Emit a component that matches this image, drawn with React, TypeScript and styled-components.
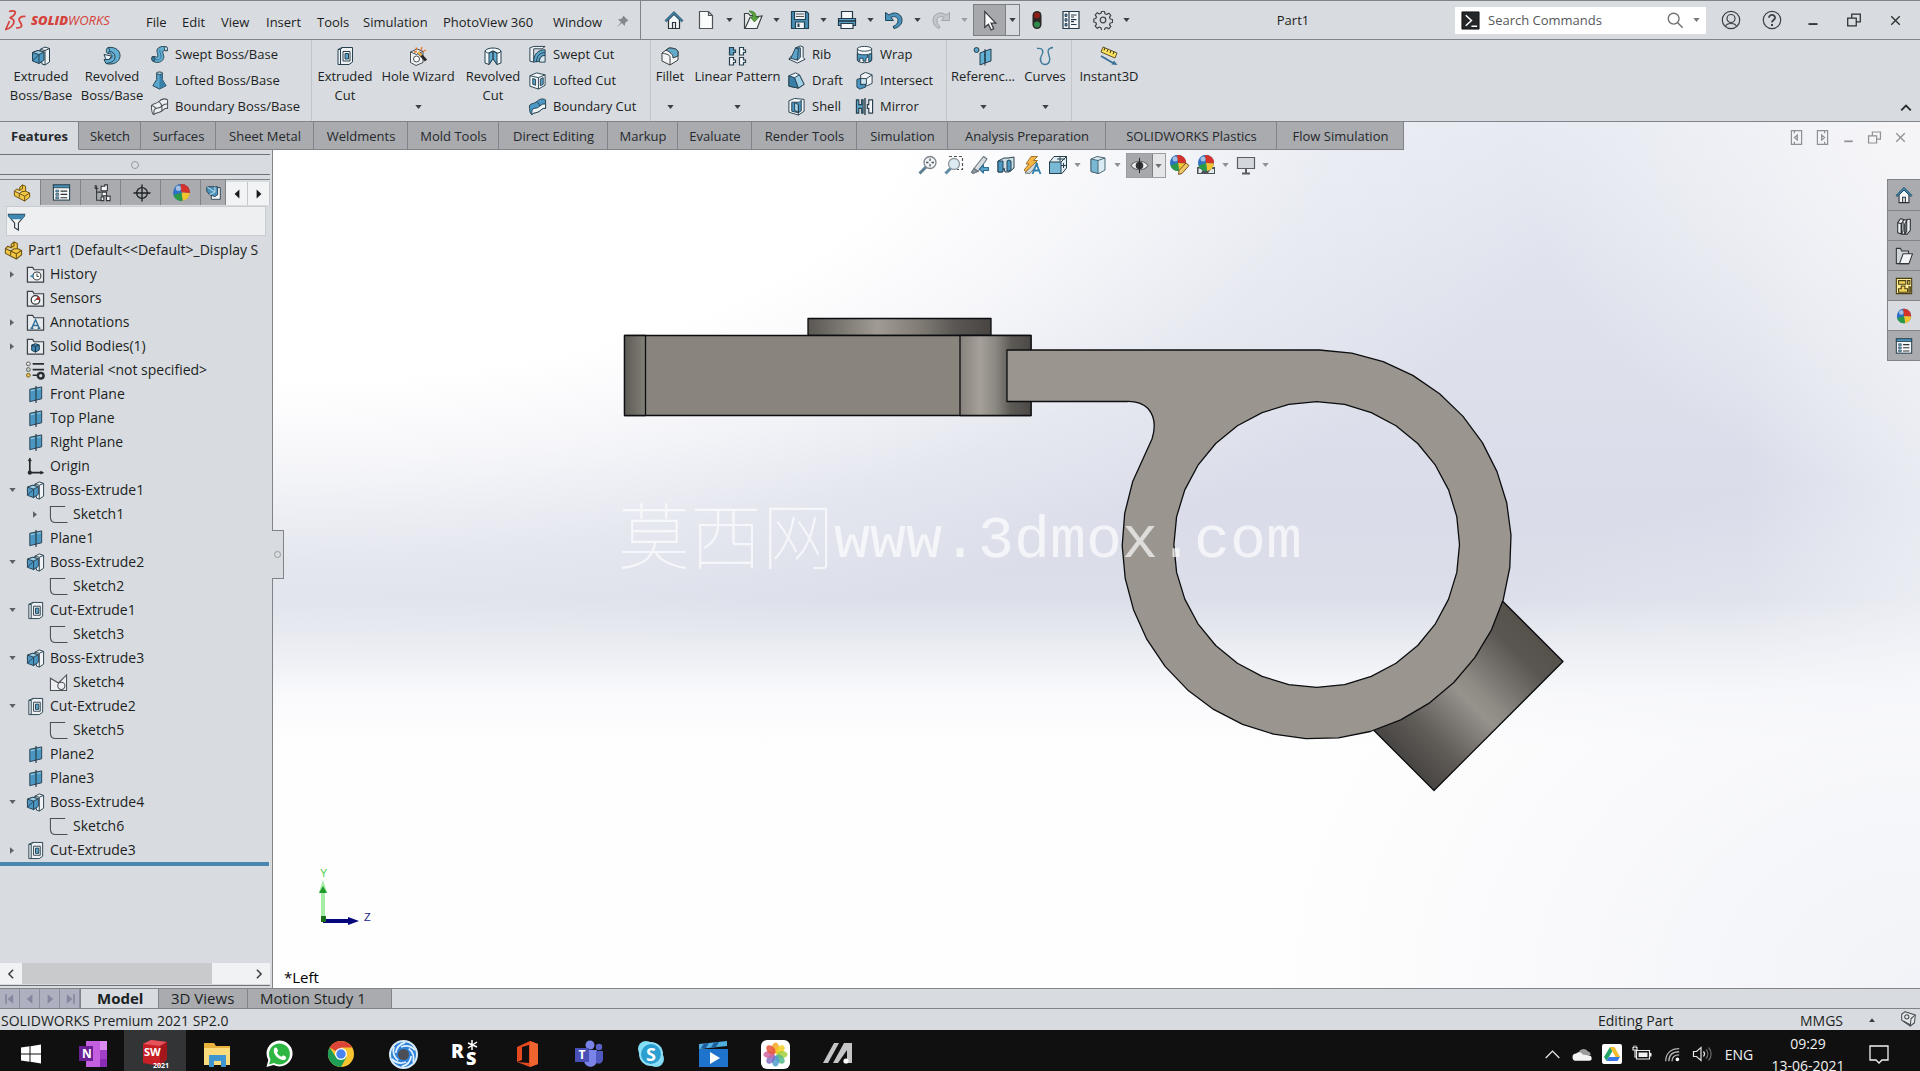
import React from "react";
import styled, { createGlobalStyle, css } from "styled-components";

const c = {
  chrome: "#d8dbdf",
  tab: "#a9abaf",
  line: "#808388",
  soft: "#c3c6ca",
  text: "#1c1f23",
  blue: "#4a93bd",
  pale: "#a9d3e6",
  ink: "#27404f",
};

const GlobalStyle = createGlobalStyle`
  * { box-sizing: border-box; }
  body { margin: 0; overflow: hidden; font-family: "Open Sans", "Noto Sans", "Noto Sans CJK SC", sans-serif; font-size: 13px; color: ${c.text}; }
  button { font: inherit; color: inherit; border: 0; background: none; padding: 0; margin: 0; }
  svg { display: block; flex: none; }
  ul { list-style: none; margin: 0; padding: 0; }
`;

/* ---------- icons, all on a 20 x 20 grid ---------- */

const folder = (
  <path d="M1.500 18V2.500h5.500l1.500 2.500H18.500V18Z" fill="#e9ecef" stroke="#3c4248" strokeWidth="1.300" />
);
const ball = (
  <>
    <circle cx="10" cy="10" r="8" fill="#2f6fc4" />
    <path d="M10 10 4 4.600A8 8 0 0 1 13 2.600Z" fill="#3a77bd" />
    <path d="M10 10 9 2A8 8 0 0 1 18 10.500Z" fill="#d5322b" />
    <path d="M10 10 18 10.500A8 8 0 0 1 11 18Z" fill="#f2c530" />
    <path d="M10 10 11 18A8 8 0 0 1 2.400 12.500Z" fill="#2b9a47" />
    <circle cx="7" cy="6" r="2.500" fill="#fff" opacity=".55" />
  </>
);
const partShape = (
  <path
    d="M1.500 8 4 5.500 7.500 7V3.500L10.500 1 14 2.500V8l4.500 2v4.500L13 19 1.500 13ZM1.500 8l5.500 2.500L10 8.500 14 8M7 10.500V15M10.500 1v4l-3 2M18.500 10 13 13.500 7 10.500M13 13.500V19"
    fill="#f3c746"
    stroke="#6d5312"
    strokeWidth="1.100"
    strokeLinejoin="round"
  />
);
const house = (
  <>
    <path d="M4.500 9.500V18.500h11V9.500L10 4Z" fill="#f4f6f7" stroke="#2b3238" strokeWidth="1.200" />
    <path d="M8.500 18.500v-6h3v6" fill="none" stroke="#2b3238" strokeWidth="1.200" />
    <path d="M1 10.500 10 1.500l9 9-1.500 1.200L10 4.500l-7.500 7.200Z" fill="#3d86ad" stroke="#1f4256" strokeWidth=".8" />
  </>
);
const sheetRows = (
  <>
    <rect x="1.500" y="2" width="17" height="16" fill="#f4f6f7" stroke="#2f4856" strokeWidth="1.200" />
    <rect x="1.500" y="2" width="17" height="3" fill="#4a93bd" stroke="#2f4856" />
    <path d="M4 7.500h3v2H4zM4 11h3v2H4zM4 14.500h3v2H4z" fill="#64a9c9" stroke="#2f4856" strokeWidth=".7" />
    <path d="M9 8.500h7M9 12h7M9 15.500h7" stroke="#333" strokeWidth="1.200" />
  </>
);
const S = { stroke: c.ink, strokeWidth: 1, strokeLinejoin: "round" as const };

const icons: Record<string, React.ReactNode> = {
  home: house,
  part: partShape,
  ball,
  rows: sheetRows,
  extrude: (
    <g {...S}>
      <path d="M9 3.500 14 1l4.500 1.500V16L14 19 11 18Z" fill="#f1f4f6" />
      <path d="M14 4.500V19M9.500 3.500l4.500 1 4.500-2" fill="none" />
      <path d="M1.500 6.500 7 4.500l6 1.500v8L8 17.500 1.500 15Z" fill="#4b98c4" />
      <path d="M1.500 6.500 8 8.500 13 6 7 4.500Z" fill="#9fd0e8" />
      <path d="M8 8.500v9M8 8.500 1.500 15" fill="none" />
    </g>
  ),
  revolve: (
    <g {...S}>
      <path d="M6 1.500C14 .5 18.500 5 18 10.500 17.500 16 11 19.500 4 17.500L2 13.500c5 .5 8-.5 8-3.500 0-2-2-2.500-4-2.500C3.500 7 4 2.500 6 1.500Z" fill="#64b0d4" />
      <path d="M6 1.500c2 1 2 4.500 0 6M4 17.500c7-1 9-3 9-7 0-3-3-5-5.500-5" fill="none" />
      <path d="M9.500 10 2 8.500l2 5h3Z" fill="#e9f4f9" />
    </g>
  ),
  sweep: (
    <g {...S}>
      <path d="M2 12.500c3-1.500 5 1 6 0 1.500-2-3-6.500 1-9.500 3-2 5-1.500 8-1l1.500 4c-3-.5-4.500-.5-5 1-.5 2 2.500 5 0 8.500S6 19 3 17Z" fill="#64b0d4" />
      <path d="M10.500 5c-1 3 2.500 6 .5 9-1 1.500-3 2-5 1.500" fill="none" stroke="#2f6f96" />
      <ellipse cx="16.800" cy="4" rx="1.600" ry="2.300" fill="#cfe6f1" />
      <ellipse cx="3.500" cy="14.700" rx="1.800" ry="2.300" fill="#3c7fa6" />
    </g>
  ),
  loft: (
    <g {...S}>
      <path d="M7 2h6v7l4 6.500L10 19l-7-3.500L7 9Z" fill="#5aa7cd" />
      <path d="M10 9v10L17 15.500 13 9V2.500h-3Z" fill="#3a7fa7" stroke="none" />
      <ellipse cx="10" cy="2.300" rx="3" ry="1.300" fill="#b6daea" />
    </g>
  ),
  boundary: (
    <g stroke="#4c5258" strokeWidth="1.100" fill="#eceff1" strokeLinejoin="round">
      <path d="M1.500 9c2-3 5-1.500 7.500-4s6-4 9.500-2v9c-3-.5-4 1-6.500 3s-6 1-8 3.500c-2-.5-2.500-5-2.500-9.500Z" />
      <path d="M4 18.500c0-4 0-6 2.500-6.500 3-.5 4-.5 6-2.500s4-2.500 6-2M1.500 9c2 0 3 1 5 3M9 5c1 0 2.500 2 3.500 4.500M12.500 10v5" fill="none" />
    </g>
  ),
  boundaryCut: (
    <g {...S}>
      <path d="M1.500 9c2-3 5-1.500 7.500-4s6-4 9.500-2v9c-3-.5-4 1-6.500 3s-6 1-8 3.500c-2-.5-2.500-5-2.500-9.500Z" fill="#4b98c4" />
      <path d="M4 18.500c0-4 0-6 2.500-6.500 3-.5 4-.5 6-2.500s4-2.500 6-2v4.500c-3-.5-4 1-6.500 3s-6 1-8 3.500Z" fill="#eef4f7" />
      <path d="M9 5c1 0 2.500 2 3.500 4.500" fill="none" />
    </g>
  ),
  cut: (
    <g {...S}>
      <path d="M3 3.500 7 1.500h10.500V16L14 18.500H3Z" fill="#eef1f3" />
      <path d="M3 3.500h2.500V18.500M5.500 3.500 7.500 1.500" fill="none" />
      <path d="M8 5.500h7V15H8Z" fill="#f7f9fa" />
      <path d="M10 7.500h3.500V13H10Z" fill="#5ba3c8" />
    </g>
  ),
  hole: (
    <g {...S}>
      <path d="M2.500 6 9 3l6 2.500v11L8 19.500l-5.500-3Z" fill="#eef1f3" stroke="#4c4f52" />
      <path d="m2.500 6 6 2.500L15 5.500" fill="none" stroke="#4c4f52" />
      <circle cx="8.500" cy="13" r="3" fill="#fff" stroke="#4c4f52" />
      <path d="m10.500 6.500 7.500 8" stroke="#2a2824" strokeWidth="3" />
      <path d="m10 6 3.500 3.500" stroke="#e9b64a" strokeWidth="2.400" />
      <path d="M8 1.500 9 4m5-3-1 3m5 0-3 1.500M6 6l3-.5" stroke="#e7752a" strokeWidth="1.300" />
    </g>
  ),
  revolveCut: (
    <g {...S}>
      <path d="M2 5c2-4 14-4 16 0v12l-4 1.500-4-6-4 6L2 17Z" fill="#f3f8fa" />
      <path d="M6 7v11.500l4-6V5ZM14 7v11.500l-4-6V5Z" fill="#64b0d4" />
      <path d="M2 5c2 2 3 2 4 2l4-2 4 2c1 0 3 0 4-2" fill="none" />
    </g>
  ),
  sweptCut: (
    <g {...S}>
      <path d="M2 3 6 1.500h12L15 4H6v14l-4-1Z" fill="#eef1f3" />
      <path d="M6 18c0-8 4-13 12-13v6c-4 0-6 2-6 6Z" fill="#5ba3c8" />
      <path d="M9 18c0-6 3-10 9-10" fill="none" />
      <path d="M12 18h6v-7c-4 0-6 3-6 7Z" fill="#d6e9f3" />
    </g>
  ),
  loftedCut: (
    <g {...S}>
      <path d="M2 5 9 2l9 2v11l-7 4-9-3Z" fill="#f3f8fa" />
      <path d="M11 7v12M2 5l9 2 7-3" fill="none" />
      <path d="M5 8l3 .8V15l-3-1ZM13 8.500l3-1.500v7l-3 1.500Z" fill="#5ba3c8" />
    </g>
  ),
  fillet: (
    <g {...S} stroke="#3a3f44">
      <path d="M2 7 9 2c5 0 9 1.500 9 4v8l-8 5-8-4Z" fill="#f2f4f5" />
      <path d="M2 7c3 1 8 1 8 4.500V19" fill="none" />
      <path d="M6 4.200 9 2c5 0 9 1.500 9 4v4l-5 2c0-4-3-6-7-7.800Z" fill="#62aacb" />
    </g>
  ),
  pattern: (
    <g strokeWidth="1.200" stroke={c.ink}>
      <path d="M1.500 1.500h4V4h2v2.500h-2V9h-4Z" fill="#5ba3c8" />
      <path d="M11.500 1.500h4V4h2v2.500h-2V9h-4ZM1.500 11.500h4V14h2v2.500h-2V19h-4ZM11.500 11.500h4V14h2v2.500h-2V19h-4Z" fill="#f3f5f6" />
    </g>
  ),
  rib: (
    <g {...S}>
      <path d="M9 3 14 1l3 1v11l2 2-8 4-9-4 2-3 5-2Z" fill="#eef1f3" />
      <path d="M9 3 4 14l7 2 3-3V3Z" fill="#5ba3c8" />
      <path d="m9 3 3 1-1 12M4 14l-2 1" fill="none" />
    </g>
  ),
  draft: (
    <g {...S}>
      <path d="M2 5 9 2l4 2 5 10-6 4-10-2Z" fill="#eef4f7" />
      <path d="m2 5 6 2 4 11-10-2Z" fill="#3a7fa7" />
      <path d="m8 7 5-3 5 10-6 4Z" fill="#9fd0e8" />
    </g>
  ),
  shell: (
    <g {...S}>
      <path d="M2 4 8 1.500l10 1V15l-6 4-10-3Z" fill="#f3f6f8" />
      <path d="M5 5.500h8l2-2v11l-3 2-7-1.500Z" fill="#4b98c4" />
      <path d="M12 8 8 6v8l4 2ZM12 8v11" fill="#a9d3e6" />
    </g>
  ),
  wrap: (
    <g {...S}>
      <path d="M2.500 4v12c0 3.500 15 3.500 15 0V4Z" fill="#f3f6f8" />
      <ellipse cx="10" cy="4" rx="7.500" ry="2.500" fill="#fff" />
      <path d="M2.500 9c3 1.500 8 1.500 11 1v3l-2 1v3h-3v-3H5v3c-2-.5-2.500-1-2.500-2Z" fill="#4b98c4" />
      <path d="M14.500 9.500 17.500 9v7l-3 1.500Z" fill="#4b98c4" />
    </g>
  ),
  intersect: (
    <g {...S}>
      <path d="M6 4 11 1.500 18 4v9l-5 2.500H6Z" fill="#f1f4f6" />
      <path d="M2 9 6 7.500v7l5-1V17l-6 2-3-2Z" fill="#4b98c4" />
      <path d="M6 8h6v6H6ZM12 8l6-4" fill="#cfe6f1" />
    </g>
  ),
  mirror: (
    <g stroke={c.ink} strokeWidth="1.200">
      <path d="M1.500 3H4v5h3V3h1.500v14H7v-5H4v5H1.500Z" fill="#5ba3c8" />
      <path d="M18.500 3H14.500v5H13v4h1.500v5h4Z" fill="#f3f5f6" />
      <path d="M10.500 1v18" strokeWidth="1.500" />
    </g>
  ),
  refgeo: (
    <g {...S}>
      <path d="m7 7 5-2v12l-5 2ZM12 5l6-2v12l-6 2Z" fill="#64b0d4" />
      <path d="M12 3v17" strokeDasharray="3 1.500" />
      <circle cx="3.500" cy="4" r="2.500" fill="#5ba3c8" />
    </g>
  ),
  curves: <path d="M2 2.500c6-1 7 3 4.500 7S6 18.500 10 18.500s6-4 4-9S13 2 18 1.500" fill="none" stroke="#3f7c9e" strokeWidth="1.400" />,
  instant3d: (
    <>
      <path d="m4 1 14 6-2 5L2 6Z" fill="#ffe25e" stroke="#4d431c" strokeWidth=".9" />
      <path d="m6 2 -1 2.500m4-1.200-1 2.500m4-1.300-1 2.500m4-1.200-1 2.500" stroke="#3a3315" strokeWidth="1" />
      <path d="m2 10 12 7" stroke="#3c6f9a" strokeWidth="2" />
      <path d="m18.500 19-6-.5 2.500-4Z" fill="#3c6f9a" />
    </>
  ),
  newdoc: <path d="M3.500 1.500h9l4 4v13h-13ZM12.500 1.500v4h4" fill="#fafbfb" stroke="#4f5459" strokeWidth="1.200" />,
  open: (
    <>
      <path d="M1.500 18.500V3.500h4l1.500 2h5v13Z" fill="#e8eaec" stroke="#3e4347" strokeWidth="1.200" />
      <path d="m2 18.500 5-11 12-1.500-5 12.500Z" fill="#f5f6f7" stroke="#3e4347" strokeWidth="1.200" />
      <path d="M6 1c5 0 7 2 7 6h3l-4.500 5L7 7h3c0-2-1-4-4-6Z" fill="#5aa33f" stroke="#2e6b1c" strokeWidth=".7" />
    </>
  ),
  save: (
    <g stroke="#1f4256" strokeWidth="1.200">
      <path d="M1.500 1.500h15l2 2v15h-17Z" fill="#4a8fb5" />
      <path d="M4.500 1.500h11v8h-11Z" fill="#eef2f4" />
      <path d="M6 4h8M6 6.500h8" stroke="#555" />
      <path d="M5.500 12h9v6.500h-9Z" fill="#f1f4f6" />
      <path d="M7.500 13.500h2v3.500h-2z" fill="#1f4256" stroke="none" />
    </g>
  ),
  print: (
    <g stroke="#24394a" strokeWidth="1.200">
      <path d="M4.500 1.500h11v7h-11Z" fill="#f7f8f9" />
      <path d="M1.500 8.500h17v7h-17Z" fill="#5ba3c8" />
      <path d="M4 13.500h12v5H4Z" fill="#f7f8f9" />
      <path d="M1.500 11h17" strokeWidth="1.600" />
    </g>
  ),
  undo: <path d="M1.500 2.500v8h8l-2.500-3c3-2 7-.5 7 3 0 3-2 5-5 6l1 2c5-1 8-4 8-8.500 0-6-7.500-9.500-13-5Z" fill="#4a93bd" stroke="#1f4256" strokeWidth="1" />,
  redo: <path d="M18.500 2.500v8h-8l2.500-3c-3-2-7-.5-7 3 0 3 1 5 3 6l-1 2c-4-2-6-4-6-8.500 0-6 7.500-9.500 13-5Z" fill="#c3c6ca" stroke="#9da1a6" strokeWidth=".9" />,
  cursor: <path d="M5.500 1.500v15l3.500-3 2.500 5.500 2.500-1.200-2.500-5.300h4.500Z" fill="#fff" stroke="#3b3e42" strokeWidth="1.200" />,
  traffic: (
    <>
      <rect x="5.500" y="1" width="9" height="18" rx="4.500" fill="#2a2725" />
      <circle cx="10" cy="5.500" r="3" fill="#8d1f17" />
      <circle cx="10" cy="14.500" r="3" fill="#2f8b4b" />
    </>
  ),
  list: (
    <g stroke="#24394a" strokeWidth="1.200">
      <path d="M2 1.500h16v17H2Z" fill="#f4f6f7" />
      <path d="M8 1.500v17" />
      <path d="M4 4h2v2.500H4zM4 8.700h2v2.500H4zM4 13.500h2V16H4z" fill="#4a93bd" strokeWidth=".8" />
      <path d="M10 5h5.500M10 7h3M10 9.700h5.500M10 11.700h3M10 14.500h5.500" />
    </g>
  ),
  gear: (
    <g fill="none" stroke="#3f4448">
      <circle cx="10" cy="10" r="2.800" strokeWidth="1.200" />
      <path
        d="M8.500 1.500h3l.5 2.300 1.700.7 2-1.300 2.100 2.100-1.300 2 .7 1.700 2.300.5v3l-2.300.5-.7 1.700 1.300 2-2.100 2.100-2-1.300-1.700.7-.5 2.300h-3L8 17.700 6.300 17l-2 1.300-2.100-2.100 1.300-2L2.800 12.500.8 12V9l2-.5.700-1.700-1.300-2 2.100-2.100 2 1.300L8 3.300Z"
        strokeWidth="1.200"
        strokeLinejoin="round"
      />
    </g>
  ),
  pin: <path d="m11 2 7 7-2 .5-2.500 2.500-.5 4-4-4-7 6 6-7-4-4 4-.5L10.500 4Z" fill="#85888c" />,
  zoomfit: (
    <>
      <path d="m8 12-6.500 6.500" stroke="#5f7f93" strokeWidth="3" />
      <circle cx="12" cy="7.500" r="6" fill="#f1f4f6" stroke="#7e868c" strokeWidth="1.300" />
      <path d="M12 3.500v8M8 7.500h8" stroke="#4e565c" strokeWidth="1.300" strokeDasharray="2.500 3" />
    </>
  ),
  zoomarea: (
    <>
      <path d="m7 13-5.500 5.500" stroke="#5f8ba3" strokeWidth="3" />
      <path d="M5 1.500h13.500v13H13" fill="none" stroke="#4e565c" strokeWidth="1.200" strokeDasharray="3 2" />
      <circle cx="10" cy="9" r="5.500" fill="#dcebf2" stroke="#8d979d" strokeWidth="1.300" />
    </>
  ),
  prev: (
    <g stroke="#6a747b" strokeWidth="1.100" strokeLinejoin="round">
      <path d="M13.500 1.500 17 4 8 16.500 4 13.500Z" fill="#d7dde1" />
      <path d="M4 13.500 1.500 17l1.500 1.500 5-2Z" fill="#8f9aa1" />
      <path d="m9.500 14 4-4v2.500h5v3h-5V18Z" fill="#5ba3c8" stroke="#2f6d92" />
    </g>
  ),
  section: (
    <g {...S}>
      <path d="M2 6 8 3h4l6-1v11l-5 4H9l-1-4-2 4H2Z" fill="#cfe0e8" />
      <path d="M2 6h5v11H2ZM13 5l-2 1v10h4V6Z" fill="#4b98c4" />
    </g>
  ),
  dynann: (
    <>
      <path d="m11 6 5 3-8 9.500L3 18Z" fill="#cfd5d9" stroke="#6a747b" />
      <path d="M9 1.500h6.500l-4 4h4L4 16.500l-2-1.500 5-6H4Z" fill="#f4b545" stroke="#8a5e14" strokeWidth=".8" />
      <path d="m10.500 19 4-10 4 10M12 15.500h5" fill="none" stroke="#2f7fae" strokeWidth="1.800" />
    </>
  ),
  orient: (
    <g {...S}>
      <path d="M1.500 7 6 1.500h12.500V13L14 18.500H1.500Z" fill="#e4edf2" />
      <path d="M1.500 7H13v11.500H1.500Z" fill="#7ab9d6" />
      <path d="m13 7 5.500-5.500M12 1.500v5M9 4h8M15.500 8v5M13 10.500h5" fill="none" />
    </g>
  ),
  display: (
    <g {...S} stroke="#4b6675">
      <path d="m3 4 6-2.500L17 3v12l-6 3.500-8-2Z" fill="#d9ecf4" />
      <path d="m3 4 7 1.500v13l-7-2Z" fill="#7ab9d6" />
      <path d="m10 5.500 7-2.500" fill="none" />
    </g>
  ),
  eye: (
    <>
      <path d="M1 10c4-6 14-6 18 0-4 6-14 6-18 0Z" fill="#efefef" stroke="#66696c" strokeWidth="1.100" />
      <circle cx="10" cy="10" r="4" fill="#303234" />
      <path d="M10 2v16" stroke="#222" />
    </>
  ),
  ballPencil: (
    <>
      <g transform="translate(-2 -2)">{ball}</g>
      <path d="m16 8 3 2.500-7 8-3.500 1 .5-4Z" fill="#f1c765" stroke="#6b4a17" strokeWidth=".9" />
    </>
  ),
  scene: (
    <>
      <path d="M1 12h18v7H1Z" fill="#4c5356" />
      <path d="M2.500 13.500h5L5 18H2.500zM12 18l3-4h3v4z" fill="#e4e7e8" />
      <g transform="translate(0 -2)">{ball}</g>
    </>
  ),
  monitor: (
    <g stroke="#5a5e62" strokeWidth="1.200">
      <path d="M1.500 2.500h17v11h-17Z" fill="#d3d6da" />
      <path d="M10 13.500V18M6 18.500h8" strokeWidth="2" />
    </g>
  ),
  config: (
    <g stroke="#33383c" strokeWidth="1.200" fill="#f4f6f7">
      <path d="M4 2v16h5M4 2H2.500v3H6M4 9h5" fill="none" />
      <path d="M9 2.500h4V1h3v6.500H9ZM10 9h5v4h-5ZM9 14.500h3v4H9ZM15 13.500h4v5h-4Z" />
    </g>
  ),
  target: (
    <g fill="none" stroke="#1e2225" strokeWidth="1.500">
      <circle cx="10" cy="10" r="6" />
      <path d="M10 .5v19M.5 10h19" />
    </g>
  ),
  cam: (
    <g {...S}>
      <path d="M7 4h10v13H7Z" fill="#f2f4f5" />
      <path d="M2 3h12v9l-3 2-6-2-3-4Z" fill="#4a93bd" />
      <path d="m2 3 9 6V3M11 9l-6 3" fill="none" stroke="#d4e8f1" />
    </g>
  ),
  filter: (
    <>
      <path d="M1.500 2.500h17v1.500L12 11.500V19l-4-2.500v-5L1.500 4Z" fill="#f3f5f6" stroke="#2f3a42" strokeWidth="1.200" />
      <path d="M1.500 2.500h17v2l-2.500 3H4L1.500 4.500Z" fill="#3f88b3" />
    </>
  ),
  history: (
    <>
      {folder}
      <circle cx="11.500" cy="11.500" r="4.200" fill="#fff" stroke="#333" strokeWidth="1.100" />
      <path d="M11.500 9v3h2" fill="none" stroke="#333" />
      <path d="m4 12 3.500-2.500.5 4Z" fill="#3f88b3" />
    </>
  ),
  sensors: (
    <>
      {folder}
      <circle cx="10" cy="11.500" r="4.500" fill="#fff" stroke="#333" strokeWidth="1.300" />
      <path d="M10 11.500 13 7.500a4.500 4.500 0 0 1 1.500 4Z" fill="#c9332b" />
      <path d="m8.500 13 4-4" stroke="#333" />
    </>
  ),
  annotations: (
    <>
      {folder}
      <path d="m6 16 4-9 4 9M7.500 13.200h5M4.800 16h3M12.200 16h3" fill="none" stroke="#2f6f96" strokeWidth="1.500" />
    </>
  ),
  solids: (
    <>
      {folder}
      <path d="m6 8.500 4-1.500 4 1.500v5L10 16l-4-2Z" fill="#3f88b3" stroke="#173346" />
      <path d="m6 8.500 4 1.500 4-1.500M10 10v6" fill="none" stroke="#173346" />
    </>
  ),
  material: (
    <>
      <path d="M7 3h12M7 9h12M7 15h6" stroke="#2b2f33" strokeWidth="1.800" />
      <circle cx="2.500" cy="3" r="2" fill="#e9eceb" stroke="#555" />
      <circle cx="2.500" cy="9" r="2" fill="#c9ddc7" stroke="#555" />
      <circle cx="2.500" cy="15" r="2" fill="#e8c256" stroke="#7a621d" />
      <circle cx="15.500" cy="15.500" r="3" fill="none" stroke="#2b2f33" strokeWidth="2.600" />
    </>
  ),
  plane: (
    <g {...S}>
      <path d="M4 4.500 16.500 2v12.500L4 17.500Z" fill="#4a97c1" />
      <path d="M10.500 1v18" strokeWidth="1.300" />
      <path d="M5 6 9 5.200M12 4.600l3.500-.7" stroke="#bfe0ef" strokeWidth=".8" />
    </g>
  ),
  origin: (
    <g stroke="#25292c" strokeWidth="1.800" fill="#25292c">
      <path d="M4 3v13.500h12" fill="none" />
      <path d="m4 1-1.500 3h3ZM18.500 16.500l-3-1.500v3Z" strokeWidth=".8" />
      <circle cx="4" cy="16.500" r="1.300" />
    </g>
  ),
  sketch: <path d="M17 1.500H1.500V13c0 3.500 2 5.500 5.500 5.500h12.500" fill="none" stroke="#4b4f54" strokeWidth="1.100" />,
  sketchFull: (
    <g fill="#eceef0" stroke="#4b4f54" strokeWidth="1.100">
      <path d="M1.500 5.500v13h17V2L10 10.500Z" />
      <circle cx="13" cy="13.500" r="3.800" />
    </g>
  ),
  library: (
    <g stroke="#2d3135" strokeWidth="1.200" fill="#edeff0" strokeLinejoin="round">
      <path d="M3 6.500 6 2l3 .5v13L7 19l-4-1.500ZM7 7.500 10 3l3 .5V16l-2.500 3H7ZM11 7.500 14 2.500h3V15l-3.500 4H11Z" />
      <path d="m3 6.500 4 1v11M11 7.500v11" fill="none" />
    </g>
  ),
  taskFolder: (
    <g stroke="#33373a" strokeWidth="1.200" strokeLinejoin="round">
      <path d="M1.500 18.500V1.500H6l1.500 3H15v14Z" fill="#d2d5d8" />
      <path d="m5 18.500 4-11h10.500l-4 11Z" fill="#f3f4f5" />
    </g>
  ),
  palette: (
    <g stroke="#4c4116" strokeWidth="1.200">
      <path d="M1.500 1.500h17v17h-17Z" fill="#ffec9a" />
      <path d="M4 4h8v4H4zM14 4h2.500v4H14zM7 10h4v3h3v4H4v-4h3zM15.500 11h1.500v6h-1.500z" fill="#f1d35a" />
    </g>
  ),
  tag: (
    <g stroke="#44484c" strokeWidth="1.200" fill="#e5e8ea" strokeLinejoin="round">
      <path d="M2 5 6 2l12 4-1 9-5 4L2 12Z" />
      <circle cx="8" cy="8" r="2.500" />
      <path d="m12 19 1-9 5-4M4 13l9 5" />
    </g>
  ),
  user: (
    <g fill="none" stroke="#3d4145" strokeWidth="1.200">
      <circle cx="10" cy="10" r="8.700" />
      <circle cx="10" cy="8.500" r="4" />
      <path d="M4.500 16.500c1-4 10-4 11 0" />
    </g>
  ),
  help: (
    <g fill="none" stroke="#3d4145" strokeWidth="1.200">
      <circle cx="10" cy="10" r="8.700" />
      <path d="M7 7.800c0-4 6.200-3.600 6 0-.2 2.200-3 2.200-3 4.700" strokeWidth="1.800" />
      <path d="M10 14v2" strokeWidth="2" />
    </g>
  ),
  min: <path d="M5 14.500h10" stroke="#2c2f32" strokeWidth="2" />,
  restore: <path d="M3 8h9.500v8.500H3ZM7.500 8V3.500H17V12h-4.500" fill="none" stroke="#2c2f32" strokeWidth="1.400" />,
  close: <path d="m5 5 10 10M15 5 5 15" stroke="#2c2f32" strokeWidth="1.600" />,
  paneL: <path d="M4 2h12v16H4ZM7.500 2v3M7.500 15v3M11 7v6l-3.500-3Z" fill="none" stroke="#2c2f32" strokeWidth="1.400" />,
  paneR: <path d="M4 2h12v16H4ZM12.500 2v3M12.500 15v3M9 7v6l3.500-3Z" fill="none" stroke="#2c2f32" strokeWidth="1.400" />,
  search: (
    <g fill="none" stroke="#6b6e71" strokeWidth="1.500">
      <circle cx="8.500" cy="8.500" r="6" />
      <path d="m13 13 5.500 5.500" />
    </g>
  ),
  prompt: (
    <>
      <path d="M1 1h18v18H1Z" fill="#24272a" stroke="#111" />
      <path d="m5 4.500 6 5.500-6 5.500M11 16h6" fill="none" stroke="#fff" strokeWidth="1.600" />
    </>
  ),
  up: <path d="m4 13 6-6 6 6" fill="none" stroke="#25292c" strokeWidth="2.200" />,
  left: <path d="m13 4-6 6 6 6" fill="none" stroke="#3c3f42" strokeWidth="2.200" />,
  right: <path d="m7 4 6 6-6 6" fill="none" stroke="#3c3f42" strokeWidth="2.200" />,
  triLeft: <path d="M13 4.500v11L7 10Z" fill="#17191b" />,
  triRight: <path d="M7 4.500v11l6-5.500Z" fill="#17191b" />,
  first: <path d="M14 4v12l-7-6ZM4 4h2v12H4Z" fill="#85879e" />,
  prior: <path d="M13 4v12l-7-6Z" fill="#85879e" />,
  next: <path d="M7 4v12l7-6Z" fill="#85879e" />,
  last: <path d="M6 4v12l7-6ZM14 4h2v12h-2Z" fill="#85879e" />,
  trayUp: <path d="m2 14 8-8 8 8" fill="none" stroke="#e6e6e6" strokeWidth="1.600" />,
  cloud: (
    <>
      <path d="M6 9a5 5 0 0 1 9-2 4 4 0 0 1 3 3L8 14Z" fill="#9b9b9b" />
      <path d="M4 16a3.500 3.500 0 0 1 0-7c2-2 5-1 6 1l6 1a2.500 2.500 0 0 1 .5 5Z" fill="#f3f3f3" />
    </>
  ),
  drive: (
    <>
      <rect width="20" height="20" rx="2" fill="#fff" />
      <path d="m8 3-6 10 2.500 4L10.500 7Z" fill="#23a566" />
      <path d="M8 3h4.500l5.500 10h-4.500Z" fill="#f6bd2d" />
      <path d="M4.500 17 7 13h11l-2.500 4Z" fill="#3b78e7" />
    </>
  ),
  battery: (
    <>
      <path d="M4.500 6.500h13V15h-13Z" fill="none" stroke="#eee" strokeWidth="1.200" />
      <path d="M6.500 8.500h9V13h-9ZM18 9h1.500v3.500H18Z" fill="#f2f2f2" />
      <path d="M1 3v3h4V3M2 1.500V4M4 1.500V4M3 6v7h2" fill="none" stroke="#eee" strokeWidth="1.100" />
    </>
  ),
  wifi: (
    <g fill="none" stroke="#b4b4b4" strokeWidth="1.400">
      <path d="M3 18C3 9 9 4 18 4M6.500 18C6.500 11 11 7.500 18 7.500M10 18c0-4.500 3-7 8-7" />
      <circle cx="16" cy="16" r="2" fill="#fff" stroke="none" />
    </g>
  ),
  volume: (
    <g fill="none" stroke="#e5e5e5" strokeWidth="1.200">
      <path d="M1.500 7.500h3L9 3.500v13l-4.500-4h-3Z" />
      <path d="M11.500 7.500c1.300 1.500 1.300 3.500 0 5" />
      <path d="M14 5.500c2.500 2.500 2.500 6.500 0 9M16.500 3.500c3.500 3.500 3.500 9.500 0 13" stroke="#6a6a6a" />
    </g>
  ),
  note: <path d="M1 2h18v14h-6l-3 3-3-3H1Z" fill="none" stroke="#f2f2f2" strokeWidth="1.300" />,
};

function Icon({ name, size = 18 }: { name: string; size?: number }) {
  return (
    <svg width={size} height={size} viewBox="0 0 20 20" aria-hidden="true">
      {icons[name]}
    </svg>
  );
}

const Caret = ({ color = "#3d4044" }: { color?: string }) => (
  <svg width="7" height="4" viewBox="0 0 8 5" aria-hidden="true">
    <path d="M0 0h8L4 5Z" fill={color} />
  </svg>
);

/* ---------- window frame ---------- */

const Frame = styled.div`
  height: 100vh;
  display: flex;
  flex-direction: column;
  overflow: hidden;
  background: ${c.chrome};
`;

const TitleBar = styled.header`
  flex: none;
  height: 40px;
  display: flex;
  align-items: stretch;
  border-top: 1px solid ${c.line};
  border-bottom: 1px solid ${c.line};
`;

const Brand = styled.div`
  display: flex;
  align-items: center;
  gap: 5px;
  width: 139px;
  padding-left: 5px;
  color: #d5423c;
  font-style: italic;
  line-height: 16px;
  b { font-weight: 800; }
`;

const MenuBar = styled.nav`
  display: flex;
  align-items: center;
  width: 502px;
  padding: 3px 4px 0 7px;
  border-right: 1px solid ${c.line};
`;

const MenuItem = styled.button<{ $w: number }>`
  width: ${(p) => p.$w}px;
  flex: none;
  height: 28px;
  text-align: left;
  white-space: nowrap;
`;

const QuickBar = styled.div`
  display: flex;
  align-items: center;
  padding-left: 16px;
`;

const Tool = styled.button<{ $w?: number }>`
  display: flex;
  align-items: center;
  justify-content: center;
  width: ${(p) => p.$w ?? 34}px;
  height: 32px;
`;

const SplitTool = styled.div<{ $h: number }>`
  display: flex;
  height: ${(p) => p.$h}px;
  border: 1px solid #7b7e82;
  button { height: 100%; }
  button:first-child { background: #a6a8ab; border-right: 1px solid #7b7e82; }
`;

const DocTitle = styled.div`
  flex: 1;
  display: flex;
  align-items: center;
  justify-content: center;
  padding-right: 4px;
`;

const Search = styled.label`
  align-self: center;
  display: flex;
  align-items: center;
  width: 251px;
  height: 27px;
  padding: 0 6px;
  background: #fff;
  input {
    flex: 1;
    min-width: 0;
    border: 0;
    outline: 0;
    background: none;
    padding: 0 8px;
    font: inherit;
    color: #333;
  }
  input::placeholder { color: #55585b; opacity: 1; }
`;

const SearchDrop = styled.button`
  width: 16px;
  display: flex;
  justify-content: flex-end;
`;

const WindowButtons = styled.div`
  display: flex;
  align-items: center;
  padding: 0 4px;
`;

/* ---------- command ribbon ---------- */

const Ribbon = styled.section`
  flex: none;
  height: 82px;
  display: flex;
  border-bottom: 1px solid ${c.line};
`;

const Group = styled.div`
  display: flex;
  border-right: 1px solid ${c.soft};
`;

const BigCommand = styled.button<{ $w: number }>`
  width: ${(p) => p.$w}px;
  display: flex;
  flex-direction: column;
  align-items: center;
  padding-top: 6px;
  line-height: 19px;
  white-space: pre;
  svg:first-child { margin-bottom: 1px; }
`;

const CommandDrop = styled.span`
  margin-top: auto;
  padding-bottom: 11px;
`;

const SmallColumn = styled.div<{ $w: number; $pad: number }>`
  width: ${(p) => p.$w}px;
  padding: 1px 0 0 ${(p) => p.$pad}px;
  display: flex;
  flex-direction: column;
`;

const SmallCommand = styled.button`
  display: flex;
  align-items: center;
  gap: 6px;
  height: 26px;
  white-space: nowrap;
`;

const Collapse = styled.button`
  margin-left: auto;
  align-self: flex-end;
  padding: 0 6px 5px 0;
`;

/* ---------- working area ---------- */

const Main = styled.main`
  flex: 1;
  min-height: 0;
  display: flex;
  flex-direction: column;
  background:
    radial-gradient(ellipse 34% 60% at 100% 100%, #f2f3f8 0%, rgba(246, 246, 250, 0) 100%),
    linear-gradient(to bottom, rgba(254, 254, 254, 0) 55%, rgba(253, 253, 254, 0.4) 60%, rgba(254, 254, 255, 0.85) 66%, #fefefe 72%),
    radial-gradient(ellipse 66% 60% at 14% 0%, #fff 50%, rgba(250, 250, 252, 0.85) 66%, rgba(240, 241, 246, 0.5) 84%, rgba(228, 231, 239, 0) 104%),
    radial-gradient(ellipse 24% 44% at 103% 0%, #f5f5f8 20%, rgba(240, 240, 245, 0) 100%),
    radial-gradient(ellipse 14% 90% at 105% 40%, #eff1f6 0%, rgba(236, 239, 245, 0) 100%),
    linear-gradient(to bottom, #e5e9f1 0%, #dfe2ec 20%, #dadde9 45%, #dcdfe9 55%, #dcdfe9 100%);
`;

const TabRow = styled.div`
  flex: none;
  display: flex;
  height: 28px;
`;

const CommandTab = styled.button<{ $w: number; $on?: boolean }>`
  width: ${(p) => p.$w}px;
  background: ${(p) => (p.$on ? c.chrome : c.tab)};
  border-right: 1px solid ${c.line};
  border-bottom: 1px solid ${(p) => (p.$on ? c.chrome : c.line)};
  font-weight: ${(p) => (p.$on ? 700 : 400)};
  color: #25282c;
  white-space: nowrap;
  padding-left: 1px;
`;

const DocButtons = styled.div`
  margin-left: auto;
  display: flex;
  align-items: center;
  padding: 2px 7px 0 0;
  opacity: 0.5;
`;

const Work = styled.div`
  flex: 1;
  min-height: 0;
  display: flex;
`;

const Side = styled.aside`
  flex: none;
  width: 273px;
  display: flex;
  flex-direction: column;
  background: ${c.chrome};
  border-right: 1px solid ${c.line};
`;

const Grip = styled.div`
  flex: none;
  margin: 4px 2px 0 0;
  height: 21px;
  border-top: 1px solid #6f7378;
  border-bottom: 1px solid #6f7378;
  display: flex;
  align-items: center;
  justify-content: center;
  &::before {
    content: "";
    width: 6px;
    height: 6px;
    border: 1px solid #97999d;
    border-radius: 50%;
  }
`;

const SideTabs = styled.div`
  flex: none;
  display: flex;
  height: 26px;
  margin: 4px 2px 0 0;
  border-top: 1px solid ${c.line};
`;

const SideTab = styled.button<{ $on?: boolean; $w?: number }>`
  flex: none;
  width: ${(p) => p.$w ?? 40}px;
  overflow: hidden;
  display: flex;
  align-items: center;
  justify-content: center;
  padding-left: ${(p) => (p.$on ? 4 : 2)}px;
  background: ${(p) => (p.$on ? c.chrome : c.tab)};
  border-right: 1px solid ${c.line};
`;

const SideScroll = styled.button`
  flex: 1;
  display: flex;
  align-items: center;
  justify-content: center;
  background: #f2f3f4;
  border-right: 1px solid #c5c7ca;
  margin-top: 2px;
`;

const FilterBox = styled.label`
  flex: none;
  display: flex;
  align-items: center;
  height: 30px;
  margin: 1px 6px 2px 6px;
  background: #eeeff1;
  border: 1px solid #c9cbce;
  input { flex: 1; min-width: 0; border: 0; background: none; outline: 0; font: inherit; }
`;

const Tree = styled.ul`
  flex: none;
  overflow: hidden;
  margin-right: 3px;
  font-size: 14px;
  line-height: 24px;
  border-bottom: 4px solid #4a86ae;
`;

const TreeRow = styled.li<{ $depth: number }>`
  display: flex;
  align-items: center;
  height: 24px;
  padding-left: ${(p) => 4 + Math.max(0, p.$depth - 1) * 23}px;
  white-space: pre;
`;

const Twist = styled.button`
  width: 16px;
  height: 16px;
  margin-right: 6px;
  display: flex;
  align-items: center;
  justify-content: center;
`;

const TreeLabel = styled.span`
  padding-left: 5px;
`;

const HScroll = styled.div`
  flex: none;
  margin: auto 2px 1px 0;
  height: 21px;
  display: flex;
  background: #f1f2f3;
  button { width: 22px; display: flex; align-items: center; justify-content: center; }
`;

const Thumb = styled.div`
  flex: 1;
  &::before { content: ""; display: block; width: 84%; height: 100%; background: #c9cacb; }
`;

const SideFoot = styled.div`
  flex: none;
  height: 3px;
  border-top: 1px solid #6f7378;
  margin-right: 2px;
`;

const Viewport = styled.section`
  flex: 1;
  min-width: 0;
  position: relative;
`;

const Splitter = styled.button`
  position: absolute;
  left: -1px;
  top: 380px;
  width: 12px;
  height: 49px;
  background: ${c.chrome};
  border: 1px solid ${c.line};
  border-left: 0;
  display: flex;
  align-items: center;
  justify-content: center;
  &::before { content: ""; width: 5px; height: 5px; border: 1px solid #97999d; border-radius: 50%; }
`;

const HeadsUp = styled.div`
  position: absolute;
  inset: 3px 0 auto 0;
  display: flex;
  justify-content: center;
  padding-right: 6px;
  button { height: 24px; }
`;

const HeadSplit = styled(SplitTool)`
  margin: 0 1px;
  border-color: #9b9da0;
  button { height: 100%; }
  button:last-child { background: #e5e6e8; }
`;

const ModelSvg = styled.svg`
  position: absolute;
  inset: 0;
  width: 100%;
  height: 100%;
`;

const Watermark = styled.div`
  position: absolute;
  left: 345px;
  top: 331px;
  display: flex;
  align-items: center;
  height: 100px;
  color: rgba(255, 255, 255, 0.68);
  font-family: "Liberation Mono", monospace;
  font-size: 60px;
  white-space: nowrap;
`;

const WatermarkHan = styled.span`
  font-family: "Noto Sans CJK SC", sans-serif;
  font-weight: 100;
  font-size: 72px;
`;

const WatermarkLatin = styled.span`
  padding-top: 20px;
`;

const Triad = styled.svg`
  position: absolute;
  left: 30px;
  bottom: 50px;
  font-family: "Liberation Sans", Arial, sans-serif;
  font-size: 11px;
`;

const ViewName = styled.div`
  position: absolute;
  left: 11px;
  bottom: 1px;
  font-size: 15px;
  line-height: 20px;
  color: #000;
`;

const TaskPane = styled.div`
  position: absolute;
  right: 0;
  top: 29px;
  width: 33px;
  border: 1px solid ${c.line};
  border-right: 0;
`;

const TaskPaneTab = styled.button<{ $on?: boolean }>`
  display: flex;
  align-items: center;
  justify-content: center;
  width: 100%;
  height: 30px;
  background: ${(p) => (p.$on ? c.chrome : c.tab)};
  & + & { border-top: 1px solid ${c.line}; }
`;

/* ---------- bottom bars ---------- */

const BottomTabs = styled.nav`
  flex: none;
  height: 21px;
  display: flex;
  border-top: 1px solid ${c.line};
  border-bottom: 1px solid ${c.line};
  font-size: 15px;
`;

const NavCell = styled.button`
  width: 20px;
  display: flex;
  align-items: center;
  justify-content: center;
  background: #aeb0c0;
  border-right: 1px solid #8b8da0;
`;

const BottomTab = styled.button<{ $w: number; $on?: boolean }>`
  width: ${(p) => p.$w}px;
  line-height: 19px;
  background: ${(p) => (p.$on ? c.chrome : c.tab)};
  font-weight: ${(p) => (p.$on ? 700 : 400)};
  border-right: 1px solid ${c.line};
  border-left: ${(p) => (p.$on ? `1px solid ${c.line}` : "0")};
  text-align: left;
  padding-left: ${(p) => (p.$on ? 16 : 12)}px;
`;

const Status = styled.footer`
  flex: none;
  height: 21px;
  overflow: hidden;
  display: flex;
  padding: 1px 3px 0 1px;
  font-size: 14px;
  line-height: 22px;
`;

const StatusText = styled.span<{ $w?: number }>`
  ${(p) => (p.$w ? css`width: ${p.$w}px;` : css`flex: 1;`)}
`;

const StatusDrop = styled.button`
  width: 31px;
  height: 20px;
  display: flex;
  align-items: center;
`;

const TaskBar = styled.div`
  flex: none;
  height: 41px;
  overflow: hidden;
  background: #101010;
  color: #f2f2f2;
  font-size: 14px;
`;

const TaskBarInner = styled.div`
  height: 48px;
  display: flex;
`;

const AppButton = styled.button<{ $on?: boolean }>`
  width: 62px;
  display: flex;
  align-items: center;
  justify-content: center;
  background: ${(p) => (p.$on ? "#333436" : "none")};
  svg { overflow: visible; }
`;

const Tray = styled.div`
  margin-left: auto;
  display: flex;
  align-items: center;
  padding-right: 17px;
`;

const TrayButton = styled.button<{ $w?: number }>`
  width: ${(p) => p.$w ?? 30}px;
  display: flex;
  justify-content: center;
`;

const Clock = styled.button`
  width: 94px;
  line-height: 22px;
  text-align: center;
  white-space: pre-line;
  padding-top: 1px;
`;

/* ---------- data ---------- */

const menus: [string, number][] = [
  ["File", 36], ["Edit", 39], ["View", 45], ["Insert", 51], ["Tools", 46], ["Simulation", 80], ["PhotoView 360", 110], ["Window", 56],
];

const tabs: [string, number][] = [
  ["Features", 79], ["Sketch", 62], ["Surfaces", 75], ["Sheet Metal", 98], ["Weldments", 94], ["Mold Tools", 91],
  ["Direct Editing", 109], ["Markup", 70], ["Evaluate", 74], ["Render Tools", 105], ["Simulation", 91],
  ["Analysis Preparation", 158], ["SOLIDWORKS Plastics", 171], ["Flow Simulation", 127],
];

type Row = { label: string; icon: string; depth?: number; twist?: "open" | "shut" };
const tree: Row[] = [
  { label: "Part1  (Default<<Default>_Display S", icon: "part", depth: 0 },
  { label: "History", icon: "history", twist: "shut" },
  { label: "Sensors", icon: "sensors" },
  { label: "Annotations", icon: "annotations", twist: "shut" },
  { label: "Solid Bodies(1)", icon: "solids", twist: "shut" },
  { label: "Material <not specified>", icon: "material" },
  { label: "Front Plane", icon: "plane" },
  { label: "Top Plane", icon: "plane" },
  { label: "Right Plane", icon: "plane" },
  { label: "Origin", icon: "origin" },
  { label: "Boss-Extrude1", icon: "extrude", twist: "open" },
  { label: "Sketch1", icon: "sketch", depth: 2, twist: "shut" },
  { label: "Plane1", icon: "plane" },
  { label: "Boss-Extrude2", icon: "extrude", twist: "open" },
  { label: "Sketch2", icon: "sketch", depth: 2 },
  { label: "Cut-Extrude1", icon: "cut", twist: "open" },
  { label: "Sketch3", icon: "sketch", depth: 2 },
  { label: "Boss-Extrude3", icon: "extrude", twist: "open" },
  { label: "Sketch4", icon: "sketchFull", depth: 2 },
  { label: "Cut-Extrude2", icon: "cut", twist: "open" },
  { label: "Sketch5", icon: "sketch", depth: 2 },
  { label: "Plane2", icon: "plane" },
  { label: "Plane3", icon: "plane" },
  { label: "Boss-Extrude4", icon: "extrude", twist: "open" },
  { label: "Sketch6", icon: "sketch", depth: 2 },
  { label: "Cut-Extrude3", icon: "cut", twist: "shut" },
];

/* ---------- taskbar logos, 29 x 29 ---------- */

const petals = ["#f6a623", "#f2d021", "#a6cf3f", "#54b98a", "#4f9fd0", "#8570c4", "#d0639f", "#e8553b"];

const apps: { name: string; on?: boolean; art: React.ReactNode }[] = [
  { name: "Start", art: <path d="M4 7.500 12.500 6.300v7.200H4ZM13.500 6.200 24 4.500v9H13.500ZM4 14.500h8.500v7.200L4 20.500ZM13.500 14.500H24v9l-10.500-1.700Z" fill="#fff" /> },
  {
    name: "OneNote",
    art: (
      <>
        <path d="M7 1h21v26H7Z" fill="#c45fe0" />
        <path d="M21 1h7v9h-7Z" fill="#d98bf0" /><path d="M21 10h7v9h-7Z" fill="#a23fc9" /><path d="M21 19h7v8h-7Z" fill="#8a2db4" />
        <path d="M0 6h14v15H0Z" fill="#6b1f94" />
        <text x="3" y="18" fontSize="12" fontWeight="700" fill="#fff">N</text>
      </>
    ),
  },
  {
    name: "SOLIDWORKS 2021",
    on: true,
    art: (
      <>
        <path d="m2 4 8-4 16 2v17l-7 7L2 23Z" fill="#c71f25" />
        <path d="m2 4 17 2 7-4L10 0Z" fill="#e5525a" />
        <path d="M19 6 26 2v17l-7 7Z" fill="#a3171c" />
        <text x="3" y="16" fontSize="11" fontWeight="700" fill="#fff">SW</text>
        <text x="12" y="28" fontSize="7" fontWeight="700" fill="#fff">2021</text>
      </>
    ),
  },
  {
    name: "File Explorer",
    art: (
      <>
        <path d="M1 3h10l2 3h14v19H1Z" fill="#e8b23c" />
        <path d="M1 8h26v17H1Z" fill="#fbdc7c" />
        <path d="M6 27V15h17v12h-5v-6h-7v6Z" fill="#3f95cf" />
      </>
    ),
  },
  {
    name: "WhatsApp",
    art: (
      <>
        <path d="M1.500 27 3.300 20A13 13 0 1 1 8.500 25Z" fill="#fff" />
        <path d="M4 24.500 5.500 19.500A10.500 10.500 0 1 1 9 23Z" fill="#2db742" />
        <path d="M9.500 8c2-1.500 2.500 0 3.500 2.500.5 1-1 1.500-1 2.200 1 2 2.500 3.300 4.500 4 .7 0 1.300-1.700 2.200-1.300 2 1 3 1.200 2.300 3-1.500 3-6 1.500-8.500-.8S7.500 11.500 9.500 8Z" fill="#fff" />
      </>
    ),
  },
  {
    name: "Chrome",
    art: (
      <>
        <circle cx="14" cy="14" r="13" fill="#f6c52f" />
        <path d="M14 14 2.700 7.500A13 13 0 0 1 25.300 7.500H14Z" fill="#db4437" />
        <path d="M2.700 7.500A13 13 0 0 0 14 27l5.500-10-11-.5Z" fill="#1e9d57" />
        <circle cx="14" cy="14" r="6" fill="#fff" /><circle cx="14" cy="14" r="4.700" fill="#4a84f0" />
      </>
    ),
  },
  {
    name: "Camera lens",
    art: (
      <>
        <circle cx="14.500" cy="14.500" r="14.500" fill="#d9ecfb" />
        <circle cx="14.500" cy="14.500" r="12.500" fill="#2f82d8" />
        {[0, 60, 120, 180, 240, 300].map((a) => (
          <path key={a} d="M12 7C17 5 22 6 26 10" transform={`rotate(${a} 14.500 14.500)`} stroke="#dff0ff" strokeWidth="1.800" fill="none" />
        ))}
        <circle cx="14.500" cy="14.500" r="5.500" fill="#4b4f55" />
      </>
    ),
  },
  {
    name: "RS",
    art: (
      <>
        <text x="0" y="18" fontSize="19" fontWeight="800" fill="#fff">R</text>
        <text x="15" y="25" fontSize="18" fontWeight="800" fill="#fff">S</text>
        <path d="M21 0v10M17 3l9 4M26 2 17 8" stroke="#fff" strokeWidth="1.500" />
      </>
    ),
  },
  {
    name: "Office",
    art: (
      <>
        <path d="M4 7 17 1l8 3v20l-8 3-13-5 12 1V5L9 7v13l-5 2Z" fill="#e4491f" />
        <path d="m17 1 8 3v20l-8 3Z" fill="#f0642f" />
      </>
    ),
  },
  {
    name: "Teams",
    art: (
      <>
        <circle cx="15" cy="5" r="4.500" fill="#7a83e8" /><circle cx="24" cy="7" r="3.200" fill="#5a63c9" />
        <path d="M9 10h13v10c0 9-13 9-13 0Z" fill="#7a83e8" /><path d="M21 11h7v8c0 5-6 6-7 3Z" fill="#5059c0" />
        <path d="M0 8h14v14H0Z" fill="#4850b5" />
        <text x="3.500" y="19" fontSize="12" fontWeight="700" fill="#fff">T</text>
      </>
    ),
  },
  {
    name: "Skype",
    art: (
      <>
        <circle cx="9" cy="9" r="8" fill="#7fdcf5" /><circle cx="19" cy="19" r="8" fill="#7fdcf5" /><circle cx="14" cy="14" r="12" fill="#8fe0f6" />
        <circle cx="14" cy="14" r="10" fill="#2a9fd0" />
        <text x="9" y="21" fontSize="18" fontWeight="700" fill="#fff">S</text>
      </>
    ),
  },
  {
    name: "Movies",
    art: (
      <>
        <path d="M0 4 28 1v5L0 9Z" fill="#4fb0e0" /><path d="m5 3.500 5-.5-3 5H2ZM15 2.500l5-.5-3 5-5 .5Z" fill="#1f5f9f" />
        <path d="M0 9h29v18H0Z" fill="#1e74cc" /><path d="m11 12 10 6-10 6Z" fill="#fff" />
      </>
    ),
  },
  {
    name: "Photos",
    art: (
      <>
        <rect width="29" height="29" rx="6" fill="#fff" />
        {petals.map((f, i) => (
          <ellipse key={f} cx="14.500" cy="8" rx="3.600" ry="5.500" fill={f} opacity=".85" transform={`rotate(${i * 45} 14.500 14.500)`} />
        ))}
      </>
    ),
  },
  {
    name: "MA",
    art: (
      <>
        <path d="M0 23 11 3h5L5 23ZM10 23 21 3h8v20h-5V10l-9 13Z" fill="#c3c5c7" /><circle cx="23" cy="21" r="2.600" fill="#fff" />
      </>
    ),
  },
];

/* ---------- model geometry ---------- */

const ring = (cx: number, cy: number, r: number, from: number, step: number, n: number) =>
  Array.from({ length: n }, (_, i) => {
    const a = ((from + step * i) * Math.PI) / 180;
    return `${(cx + r * Math.sin(a)).toFixed(1)} ${(cy - r * Math.cos(a)).toFixed(1)}`;
  }).join("L");

const bodyPath =
  `M1007 350L${ring(1316.700, 544.500, 194.500, 0.8, 9.6, 31)}` +
  `L1152 439Q1158 420 1148 408.500Q1140 401 1127 401.500L1007 401.500Z` +
  `M${ring(1316.700, 544.500, 142.800, 0, 11.25, 32)}Z`;

function Model() {
  return (
    <ModelSvg viewBox="273 150 1647 838" preserveAspectRatio="xMidYMid meet" role="img" aria-label="Part1 seen from the left">
      <defs>
        <linearGradient id="disc">
          <stop offset="0" stopColor="#5a5651" /><stop offset=".38" stopColor="#a09c95" /><stop offset=".6" stopColor="#827e77" />
          <stop offset=".8" stopColor="#5b5754" /><stop offset="1" stopColor="#474442" />
        </linearGradient>
        <linearGradient id="edge">
          <stop offset="0" stopColor="#5d5a55" /><stop offset="1" stopColor="#838078" />
        </linearGradient>
        <linearGradient id="round">
          <stop offset="0" stopColor="#86827b" /><stop offset=".28" stopColor="#a5a19a" /><stop offset=".5" stopColor="#8b8781" />
          <stop offset=".72" stopColor="#5d5a56" /><stop offset="1" stopColor="#4b4846" />
        </linearGradient>
        <linearGradient id="boss" gradientUnits="userSpaceOnUse" x1="1434" y1="790" x2="1563" y2="661">
          <stop offset="0" stopColor="#494542" /><stop offset=".2" stopColor="#605c58" /><stop offset=".48" stopColor="#96928c" />
          <stop offset=".56" stopColor="#8e8a84" /><stop offset=".85" stopColor="#5a5752" /><stop offset="1" stopColor="#55514b" />
        </linearGradient>
      </defs>
      <g stroke="#0c0d10" strokeWidth="1.300" strokeLinejoin="round">
        <path d="M1374 730.500 1503 601.500 1563 661.500 1434 790.500Z" fill="url(#boss)" />
        <path d="M808 318.500H991V335.500H808Z" fill="url(#disc)" />
        <path d="M624.500 335.500H1031V415.500H624.500Z" fill="#89857d" />
        <path d="M624.500 335.500H645.500V415.500H624.500Z" fill="url(#edge)" />
        <path d="M960 335.500H1031V415.500H960Z" fill="url(#round)" />
        <path d={bodyPath} fill="#9a968f" fillRule="evenodd" />
      </g>
    </ModelSvg>
  );
}

/* ---------- pieces ---------- */

function Big({ w, icon, label, drop }: { w: number; icon: string; label: string; drop?: boolean }) {
  return (
    <BigCommand type="button" $w={w}>
      <Icon name={icon} size={20} />
      {label}
      {drop && <CommandDrop><Caret /></CommandDrop>}
    </BigCommand>
  );
}

function Column({ w, pad = 0, items }: { w: number; pad?: number; items: [string, string][] }) {
  return (
    <SmallColumn $w={w} $pad={pad}>
      {items.map(([icon, label]) => (
        <SmallCommand type="button" key={label}>
          <Icon name={icon} size={19} />
          {label}
        </SmallCommand>
      ))}
    </SmallColumn>
  );
}

function Quick({ icon, label, drop, dim }: { icon: string; label: string; drop?: boolean; dim?: boolean }) {
  return (
    <>
      <Tool type="button" $w={drop ? 30 : 34} aria-label={label}><Icon name={icon} size={20} /></Tool>
      {drop && <Tool type="button" $w={17} aria-label={`${label} options`}><Caret color={dim ? "#9a9da1" : undefined} /></Tool>}
    </>
  );
}

function Head({ icon, label, drop }: { icon: string; label: string; drop?: boolean }) {
  return (
    <>
      <Tool type="button" $w={26} aria-label={label}><Icon name={icon} size={20} /></Tool>
      {drop && <Tool type="button" $w={14} aria-label={`${label} options`}><Caret color="#8d9094" /></Tool>}
    </>
  );
}

export default function App() {
  return (
    <Frame>
      <GlobalStyle />
      <TitleBar>
        <Brand>
          <svg width="21" height="22" viewBox="0 0 21 22" aria-hidden="true">
            <g fill="none" stroke="#d5423c" strokeWidth="1.700">
              <path d="M4 2.500C8 1 12 2 9.500 5.500 8.500 7 6 8.500 4.500 9M5 9c5 1 5 5 1.500 8.500C5 19 3 20 .8 20.500L4.500 12" />
              <path d="M20.500 7.500C16 7 13 9 14.500 12c1 2 3.500 4 1.500 6-1 1-3.500 1-5 1" />
            </g>
          </svg>
          <span><b>SOLID</b>WORKS</span>
        </Brand>
        <MenuBar aria-label="Menus">
          {menus.map(([m, w]) => <MenuItem type="button" key={m} $w={w}>{m}</MenuItem>)}
          <Tool type="button" $w={28} aria-label="Pin menu"><Icon name="pin" size={15} /></Tool>
        </MenuBar>
        <QuickBar>
          <Quick icon="home" label="Home" />
          <Quick icon="newdoc" label="New" drop />
          <Quick icon="open" label="Open" drop />
          <Quick icon="save" label="Save" drop />
          <Quick icon="print" label="Print" drop />
          <Quick icon="undo" label="Undo" drop />
          <Quick icon="redo" label="Redo" drop dim />
          <SplitTool $h={32}>
            <Tool type="button" $w={32} aria-label="Select"><Icon name="cursor" size={21} /></Tool>
            <Tool type="button" $w={13} aria-label="Select options"><Caret /></Tool>
          </SplitTool>
          <Quick icon="traffic" label="Rebuild" />
          <Quick icon="list" label="File properties" />
          <Quick icon="gear" label="Options" drop />
        </QuickBar>
        <DocTitle>Part1</DocTitle>
        <Search>
          <Icon name="prompt" size={19} />
          <input type="text" placeholder="Search Commands" aria-label="Search Commands" />
          <Icon name="search" size={18} />
          <SearchDrop type="button" aria-label="Search options"><Caret color="#77797c" /></SearchDrop>
        </Search>
        <WindowButtons>
          <Tool type="button" $w={41} aria-label="Account"><Icon name="user" size={20} /></Tool>
          <Tool type="button" $w={41} aria-label="Help"><Icon name="help" size={20} /></Tool>
          <Tool type="button" $w={41} aria-label="Minimize"><Icon name="min" /></Tool>
          <Tool type="button" $w={42} aria-label="Restore"><Icon name="restore" /></Tool>
          <Tool type="button" $w={41} aria-label="Close"><Icon name="close" size={17} /></Tool>
        </WindowButtons>
      </TitleBar>

      <Ribbon aria-label="Features commands">
        <Group>
          <Big w={82} icon="extrude" label={"Extruded\nBoss/Base"} />
          <Big w={60} icon="revolve" label={"Revolved\nBoss/Base"} />
          <Column w={169} pad={8} items={[["sweep", "Swept Boss/Base"], ["loft", "Lofted Boss/Base"], ["boundary", "Boundary Boss/Base"]]} />
        </Group>
        <Group>
          <Big w={66} icon="cut" label={"Extruded\nCut"} />
          <Big w={80} icon="hole" label="Hole Wizard" drop />
          <Big w={70} icon="revolveCut" label={"Revolved\nCut"} />
          <Column w={122} items={[["sweptCut", "Swept Cut"], ["loftedCut", "Lofted Cut"], ["boundaryCut", "Boundary Cut"]]} />
        </Group>
        <Group>
          <Big w={38} icon="fillet" label="Fillet" drop />
          <Big w={97} icon="pattern" label="Linear Pattern" drop />
          <Column w={69} pad={1} items={[["rib", "Rib"], ["draft", "Draft"], ["shell", "Shell"]]} />
          <Column w={91} items={[["wrap", "Wrap"], ["intersect", "Intersect"], ["mirror", "Mirror"]]} />
        </Group>
        <Group>
          <Big w={72} icon="refgeo" label="Referenc..." drop />
          <Big w={52} icon="curves" label="Curves" drop />
        </Group>
        <Big w={74} icon="instant3d" label="Instant3D" />
        <Collapse type="button" aria-label="Collapse ribbon"><Icon name="up" size={16} /></Collapse>
      </Ribbon>

      <Main>
        <TabRow>
          {tabs.map(([t, w], i) => <CommandTab type="button" key={t} $w={w} $on={i === 0}>{t}</CommandTab>)}
          <DocButtons>
            {["paneL", "paneR", "min", "restore", "close"].map((n) => (
              <Tool type="button" $w={26} key={n} aria-label={`Document ${n}`}><Icon name={n} size={17} /></Tool>
            ))}
          </DocButtons>
        </TabRow>
        <Work>
          <Side>
            <Grip />
            <SideTabs>
              <SideTab type="button" $on $w={41} aria-label="Feature tree"><Icon name="part" /></SideTab>
              <SideTab type="button" aria-label="Properties"><Icon name="rows" size={19} /></SideTab>
              <SideTab type="button" aria-label="Configurations"><Icon name="config" /></SideTab>
              <SideTab type="button" aria-label="Dimensions"><Icon name="target" /></SideTab>
              <SideTab type="button" aria-label="Appearances"><Icon name="ball" size={21} /></SideTab>
              <SideTab type="button" $w={25} aria-label="CAM"><Icon name="cam" /></SideTab>
              <SideScroll type="button" aria-label="Previous tabs"><Icon name="triLeft" size={16} /></SideScroll>
              <SideScroll type="button" aria-label="More tabs"><Icon name="triRight" size={16} /></SideScroll>
            </SideTabs>
            <FilterBox>
              <Icon name="filter" size={19} />
              <input type="text" aria-label="Filter tree" />
            </FilterBox>
            <Tree>
              {tree.map((r, i) => (
                <TreeRow key={i} $depth={r.depth ?? 1}>
                  {r.depth !== 0 && (
                    <Twist type="button" aria-label={r.twist ? `Toggle ${r.label}` : undefined} tabIndex={r.twist ? 0 : -1}>
                      {r.twist === "open" && <Caret color="#5d6064" />}
                      {r.twist === "shut" && (
                        <svg width="4" height="7" viewBox="0 0 5 8" aria-hidden="true"><path d="M0 0v8l5-4Z" fill="#5d6064" /></svg>
                      )}
                    </Twist>
                  )}
                  <Icon name={r.icon} size={19} />
                  <TreeLabel>{r.label}</TreeLabel>
                </TreeRow>
              ))}
            </Tree>
            <HScroll>
              <button type="button" aria-label="Scroll left"><Icon name="left" size={14} /></button>
              <Thumb />
              <button type="button" aria-label="Scroll right"><Icon name="right" size={14} /></button>
            </HScroll>
            <SideFoot />
          </Side>

          <Viewport aria-label="Graphics area">
            <Model />
            <Watermark><WatermarkHan>莫西网</WatermarkHan><WatermarkLatin>www.3dmox.com</WatermarkLatin></Watermark>
            <Splitter type="button" aria-label="Collapse panel" />
            <HeadsUp>
              <Head icon="zoomfit" label="Zoom to fit" />
              <Head icon="zoomarea" label="Zoom to area" />
              <Head icon="prev" label="Previous view" />
              <Head icon="section" label="Section view" />
              <Head icon="dynann" label="Dynamic annotation" />
              <Head icon="orient" label="View orientation" drop />
              <Head icon="display" label="Display style" drop />
              <HeadSplit $h={25}>
                <Tool type="button" $w={26} aria-label="Hide or show"><Icon name="eye" size={19} /></Tool>
                <Tool type="button" $w={12} aria-label="Hide or show options"><Caret color="#6d7074" /></Tool>
              </HeadSplit>
              <Head icon="ballPencil" label="Edit appearance" />
              <Head icon="scene" label="Apply scene" drop />
              <Head icon="monitor" label="View settings" drop />
            </HeadsUp>
            <TaskPane>
              {["home", "library", "taskFolder", "palette", "ball", "rows"].map((n) => (
                <TaskPaneTab type="button" key={n} $on={n === "ball"} aria-label={`Task pane ${n}`}><Icon name={n} /></TaskPaneTab>
              ))}
            </TaskPane>
            <Triad width="80" height="74" viewBox="0 0 80 74">
              <path d="M20 56V22" stroke="#a5eda5" strokeWidth="4" />
              <path d="m20 16 4 12h-8Z" fill="#a5eda5" />
              <path d="m20 22 4 7h-8Z" fill="#1f9a2a" />
              <path d="M20 57h28" stroke="#05057c" strokeWidth="4" />
              <path d="m56 57-11-4v8Z" fill="#05057c" />
              <path d="M18 52h5v6h-5Z" fill="#1a6e1a" />
              <text x="17" y="13" fill="#4fd04f">Y</text>
              <text x="61" y="57" fill="#1a1a8c">Z</text>
            </Triad>
            <ViewName>*Left</ViewName>
          </Viewport>
        </Work>
      </Main>

      <BottomTabs aria-label="Document tabs">
        {["first", "prior", "next", "last"].map((n) => (
          <NavCell type="button" key={n} aria-label={`${n} tab`}><Icon name={n} size={16} /></NavCell>
        ))}
        <BottomTab type="button" $w={79} $on>Model</BottomTab>
        <BottomTab type="button" $w={89}>3D Views</BottomTab>
        <BottomTab type="button" $w={144}>Motion Study 1</BottomTab>
      </BottomTabs>
      <Status>
        <StatusText>SOLIDWORKS Premium 2021 SP2.0</StatusText>
        <StatusText $w={202}>Editing Part</StatusText>
        <StatusText $w={69}>MMGS</StatusText>
        <StatusDrop type="button" aria-label="Unit system">
          <svg width="6" height="4" viewBox="0 0 8 5" aria-hidden="true"><path d="M0 5h8L4 0Z" fill="#3d4044" /></svg>
        </StatusDrop>
        <Icon name="tag" size={17} />
      </Status>

      <TaskBar>
        <TaskBarInner>
          {apps.map((a) => (
            <AppButton type="button" key={a.name} $on={a.on} aria-label={a.name}>
              <svg width="29" height="29" viewBox="0 0 29 29" aria-hidden="true">{a.art}</svg>
            </AppButton>
          ))}
          <Tray>
            <TrayButton type="button" aria-label="Hidden icons"><Icon name="trayUp" size={17} /></TrayButton>
            <TrayButton type="button" aria-label="OneDrive"><Icon name="cloud" size={21} /></TrayButton>
            <TrayButton type="button" aria-label="Drive"><Icon name="drive" size={20} /></TrayButton>
            <TrayButton type="button" aria-label="Battery"><Icon name="battery" size={20} /></TrayButton>
            <TrayButton type="button" aria-label="Network"><Icon name="wifi" /></TrayButton>
            <TrayButton type="button" aria-label="Volume"><Icon name="volume" size={20} /></TrayButton>
            <TrayButton type="button" $w={44}>ENG</TrayButton>
            <Clock type="button">{"09:29\n13-06-2021"}</Clock>
            <TrayButton type="button" $w={48} aria-label="Notifications"><Icon name="note" size={20} /></TrayButton>
          </Tray>
        </TaskBarInner>
      </TaskBar>
    </Frame>
  );
}
